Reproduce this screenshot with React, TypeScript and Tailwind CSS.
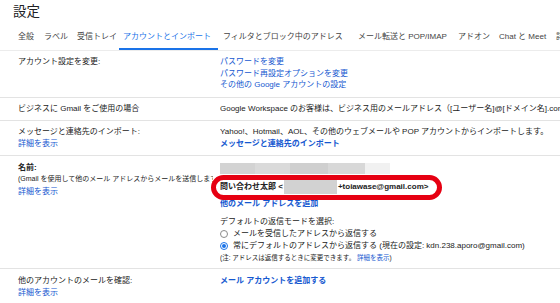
import React from 'react'

const FONT = { fontFamily: '"Liberation Sans", Arial, "Noto Sans CJK JP", sans-serif' }

const tabs = [
  { label: '全般', w: 'w-[26px]' },
  { label: 'ラベル', w: 'w-[33px]' },
  { label: '受信トレイ', w: 'w-[46px]' },
  { label: 'アカウントとインポート', w: 'w-[99px]', active: true },
  { label: 'フィルタとブロック中のアドレス', w: 'w-[136px]' },
  { label: 'メール転送と POP/IMAP', w: 'w-[100px]' },
  { label: 'アドオン', w: 'w-[41px]' },
  { label: 'Chat と Meet', w: 'w-[57px]' },
  { label: '詳細', w: 'w-[40px]' },
]

function Row({ left, right }: { left: React.ReactNode; right: React.ReactNode }) {
  return (
    <div className="flex border-b border-[#e3e3e3] pt-[5px] pb-[6px]">
      <div className="w-[220px] shrink-0 pl-[18px] text-[#222]">{left}</div>
      <div className="min-w-0 flex-1 overflow-hidden whitespace-nowrap text-[#222]">{right}</div>
    </div>
  )
}

function Radio({ checked }: { checked?: boolean }) {
  return (
    <span
      className={`mr-[5px] inline-flex h-[8px] w-[8px] shrink-0 items-center justify-center rounded-full border ${
        checked ? 'border-[#1a73e8]' : 'border-[#8a8a8a]'
      }`}
    >
      {checked && <span className="h-[4px] w-[4px] rounded-full bg-[#1a73e8]" />}
    </span>
  )
}

const link = 'text-[#1558d0]'

export default function App() {
  return (
    <div className="relative h-[303px] w-[560px] overflow-hidden bg-white text-[8px] leading-[11.5px]" style={FONT}>
      <div className="pl-[13px] pt-[3px] text-[13.5px] leading-[18px] text-[#202124]">設定</div>

      <div className="flex overflow-hidden border-b border-[#ececec] pl-[18px] whitespace-nowrap">
        {tabs.map((t) => (
          <div
            key={t.label}
            className={`${t.w} shrink-0 pt-[10px] pb-[5px] leading-[12px] border-b-2 ${
              t.active ? '-ml-[4px] pl-[4px] mr-[4px] border-[#1a73e8] text-[#1a73e8]' : 'border-transparent text-[#444]'
            } ${t.label.startsWith('フィルタ') ? 'pl-[1px]' : ''}`}
          >
            {t.label}
          </div>
        ))}
      </div>

      <Row
        left={<div>アカウント設定を変更:</div>}
        right={
          <div className={link}>
            <div>パスワードを変更</div>
            <div>パスワード再設定オプションを変更</div>
            <div>その他の Google アカウントの設定</div>
          </div>
        }
      />
      <Row
        left={<div>ビジネスに Gmail をご使用の場合</div>}
        right={
          <div>
            Google Workspace のお客様は、ビジネス用のメールアドレス（[ユーザー名]@[ドメイン名].com）で Gmail を使用できます。
          </div>
        }
      />
      <Row
        left={
          <>
            <div>メッセージと連絡先のインポート:</div>
            <div className={link}>詳細を表示</div>
          </>
        }
        right={
          <>
            <div>Yahoo!、Hotmail、AOL、その他のウェブメールや POP アカウントからインポートします。</div>
            <div className={`${link} font-bold`}>メッセージと連絡先のインポート</div>
          </>
        }
      />

      <div className="flex border-b border-[#e3e3e3] pt-[6px] pb-[5px] text-[#222]">
        <div className="w-[220px] shrink-0 pl-[18px]">
          <div className="font-bold">名前:</div>
          <div className="w-[195px] overflow-hidden whitespace-nowrap text-[7px] leading-[9.5px]">
            (Gmail を使用して他のメール アドレスからメールを送信します)
          </div>
          <div className={`${link} mt-[3px] leading-[12px]`}>詳細を表示</div>
        </div>
        <div className="min-w-0 flex-1 overflow-hidden whitespace-nowrap">
          <div className="-ml-[3px] mt-[1px] flex h-[11px]">
            <div className="w-[38px] bg-[#d3d3d3]" />
            <div className="w-[35px] bg-[#dadada]" />
            <div className="w-[38px] bg-[#cfcfcf]" />
            <div className="w-[37px] bg-[#d8d8d8]" />
            <div className="w-[25px] bg-[#f1f1f1]" />
          </div>
          <div className="mt-[6px] flex items-center font-bold leading-[12px]">
            <span>問い合わせ太郎 &lt;</span>
            <span className="mx-[1px] h-[14px] w-[53px] bg-[#d2d2d2]" />
            <span>+toiawase@gmail.com&gt;</span>
          </div>
          <div className={`${link} mt-[4px] font-bold leading-[12px]`}>他のメール アドレスを追加</div>
          <div className="mt-[6px] leading-[12px]">デフォルトの返信モードを選択:</div>
          <div className="flex items-center leading-[12px]">
            <Radio />
            メールを受信したアドレスから返信する
          </div>
          <div className="flex items-center leading-[12px]">
            <Radio checked />
            常にデフォルトのアドレスから返信する (現在の設定: kdn.238.aporo@gmail.com)
          </div>
          <div className="mt-[1px] text-[6.5px] leading-[10px]">
            (注: アドレスは返信するときに変更できます。 <span className={link}>詳細を表示</span>)
          </div>
        </div>
      </div>

      <div className="flex pt-[6px] text-[#222] leading-[12px]">
        <div className="w-[220px] shrink-0 pl-[18px]">
          <div>他のアカウントのメールを確認:</div>
          <div className={link}>詳細を表示</div>
        </div>
        <div className={`${link} font-bold`}>メール アカウントを追加する</div>
      </div>

      <div className="absolute left-[211px] top-[175px] h-[25px] w-[231px] rounded-full border-[5px] border-[#e60012]" />
    </div>
  )
}
